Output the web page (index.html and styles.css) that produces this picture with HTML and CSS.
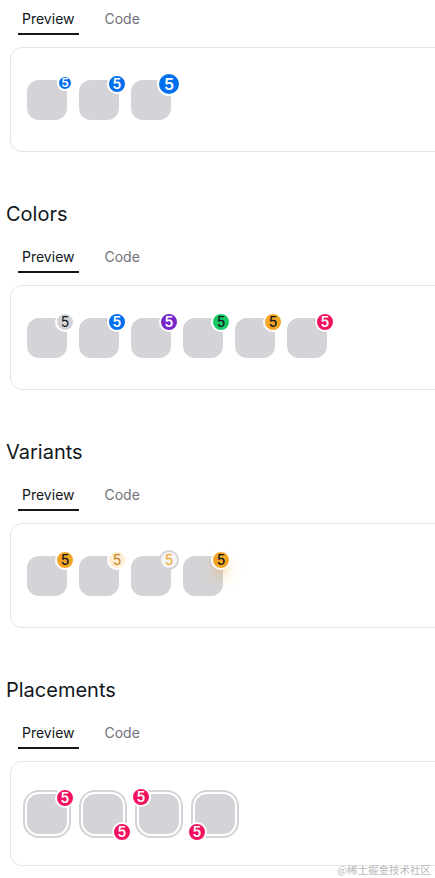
FILE: index.html
```html
<!DOCTYPE html>
<html lang="en">
<head>
<meta charset="utf-8">
<title>Badge</title>
<link rel="stylesheet" href="styles.css">
</head>
<body>
<div class="page">
  <section class="section first">
    <div class="tabs">
      <div class="tab active"><span>Preview</span></div>
      <div class="tab"><span>Code</span></div>
    </div>
    <div class="panel">
      <div class="card">
        <div class="row">
          <div class="wrap"><div class="avatar"></div><span class="badge sm primary tr">5</span></div>
          <div class="wrap"><div class="avatar"></div><span class="badge md primary tr">5</span></div>
          <div class="wrap"><div class="avatar"></div><span class="badge lg primary tr">5</span></div>
        </div>
      </div>
    </div>
  </section>

  <section class="section">
    <h2 class="title">Colors</h2>
    <div class="tabs">
      <div class="tab active"><span>Preview</span></div>
      <div class="tab"><span>Code</span></div>
    </div>
    <div class="panel">
      <div class="card">
        <div class="row">
          <div class="wrap"><div class="avatar"></div><span class="badge md default tr">5</span></div>
          <div class="wrap"><div class="avatar"></div><span class="badge md primary tr">5</span></div>
          <div class="wrap"><div class="avatar"></div><span class="badge md secondary tr">5</span></div>
          <div class="wrap"><div class="avatar"></div><span class="badge md success tr">5</span></div>
          <div class="wrap"><div class="avatar"></div><span class="badge md warning tr">5</span></div>
          <div class="wrap"><div class="avatar"></div><span class="badge md danger tr">5</span></div>
        </div>
      </div>
    </div>
  </section>

  <section class="section">
    <h2 class="title">Variants</h2>
    <div class="tabs">
      <div class="tab active"><span>Preview</span></div>
      <div class="tab"><span>Code</span></div>
    </div>
    <div class="panel">
      <div class="card">
        <div class="row">
          <div class="wrap"><div class="avatar"></div><span class="badge md warning tr">5</span></div>
          <div class="wrap"><div class="avatar"></div><span class="badge md warning-flat tr">5</span></div>
          <div class="wrap"><div class="avatar"></div><span class="badge md warning-faded tr">5</span></div>
          <div class="wrap"><div class="avatar"></div><span class="badge md warning shadow tr">5</span></div>
        </div>
      </div>
    </div>
  </section>

  <section class="section">
    <h2 class="title">Placements</h2>
    <div class="tabs">
      <div class="tab active"><span>Preview</span></div>
      <div class="tab"><span>Code</span></div>
    </div>
    <div class="panel">
      <div class="card">
        <div class="row wide">
          <div class="wrap"><div class="avatar bordered"></div><span class="badge md danger tr">5</span></div>
          <div class="wrap"><div class="avatar bordered"></div><span class="badge md danger br">5</span></div>
          <div class="wrap"><div class="avatar bordered"></div><span class="badge md danger tl">5</span></div>
          <div class="wrap"><div class="avatar bordered"></div><span class="badge md danger bl">5</span></div>
        </div>
      </div>
    </div>
  </section>
</div>
<div class="watermark">@稀土掘金技术社区</div>
</body>
</html>
```

FILE: styles.css
```css
html, body {
  margin: 0;
  padding: 0;
  background: #ffffff;
  overflow: hidden;
}

body {
  font-family: Inter, "Noto Sans", "Noto Sans CJK SC", sans-serif;
  color: #11181c;
  width: 435px;
  height: 878px;
  position: relative;
}

.page {
  padding: 3px 0 0 6px;
  width: 429px;
  overflow: hidden;
}

.section {
  display: flex;
  flex-direction: column;
  margin-top: 48px;
}

.section.first {
  margin-top: 0;
}

.title {
  margin: 0 0 13px 0;
  font-size: 20px;
  line-height: 28px;
  font-weight: 400;
  color: #11181c;
}

.tabs {
  display: flex;
  gap: 6px;
  margin-left: 4px;
  height: 32px;
}

.tab {
  position: relative;
  height: 32px;
  padding: 0 12px;
  display: flex;
  align-items: center;
  font-size: 14px;
  line-height: 20px;
  color: #71717a;
}

.tab.active {
  color: #11181c;
}

.tab.active::after {
  content: "";
  position: absolute;
  left: 10%;
  width: 80%;
  bottom: 0;
  height: 2px;
  background: #11181c;
}

.panel {
  padding-top: 12px;
  margin-left: 4px;
}

.card {
  box-sizing: border-box;
  width: 520px;
  height: 105px;
  border: 1px solid #e4e4e7;
  border-radius: 12px;
  padding: 0 16px;
  display: flex;
  align-items: center;
}

.row {
  display: flex;
  gap: 12px;
  padding-top: 1px;
}

.row.wide {
  gap: 16px;
}

.wrap {
  position: relative;
  width: 40px;
  height: 40px;
}

.avatar {
  width: 40px;
  height: 40px;
  border-radius: 12px;
  background: #d4d4d8;
}

.avatar.bordered {
  box-shadow: 0 0 0 2px #ffffff, 0 0 0 4px #d4d4d8;
}

.badge {
  position: absolute;
  box-sizing: border-box;
  display: flex;
  align-items: center;
  justify-content: center;
  border: 2px solid #ffffff;
  border-radius: 50%;
  font-weight: 500;
  line-height: 1;
  z-index: 2;
}

.badge.sm { width: 16px; height: 16px; font-size: 12px; }
.badge.md { width: 20px; height: 20px; font-size: 14px; }
.badge.lg { width: 24px; height: 24px; font-size: 16px; }

.badge.tr { top: 4px; right: 2px; transform: translate(50%, -50%); }
.badge.tl { top: 3px; left: 2px; transform: translate(-50%, -50%); }
.badge.br { bottom: 2px; right: 1px; transform: translate(50%, 50%); }
.badge.bl { bottom: 2px; left: 2px; transform: translate(-50%, 50%); }

.badge.sm.tr { top: 3px; }

.default { background: #d4d4d8; color: #11181c; font-weight: 400; }
.primary { background: #006fee; color: #ffffff; font-weight: 600; }
.secondary { background: #7828c8; color: #ffffff; font-weight: 600; }
.success { background: #17c964; color: #11181c; }
.warning { background: #f5a524; color: #11181c; }
.danger { background: #f31260; color: #ffffff; font-weight: 600; }

.warning-flat {
  background: #fdedd3;
  color: #c4841d;
  font-weight: 400;
}

.warning-faded {
  background: #f4f4f5;
  border-color: #d4d4d8;
  color: #f5a524;
  font-weight: 400;
}

.shadow {
  box-shadow: 0 10px 15px -3px rgba(245, 165, 36, 0.4), 0 4px 6px -4px rgba(245, 165, 36, 0.4);
}

.watermark {
  position: absolute;
  right: 4px;
  bottom: 2px;
  font-size: 10.5px;
  line-height: 12px;
  color: #b8b8b8;
  font-family: "Noto Sans CJK SC", sans-serif;
}
```
